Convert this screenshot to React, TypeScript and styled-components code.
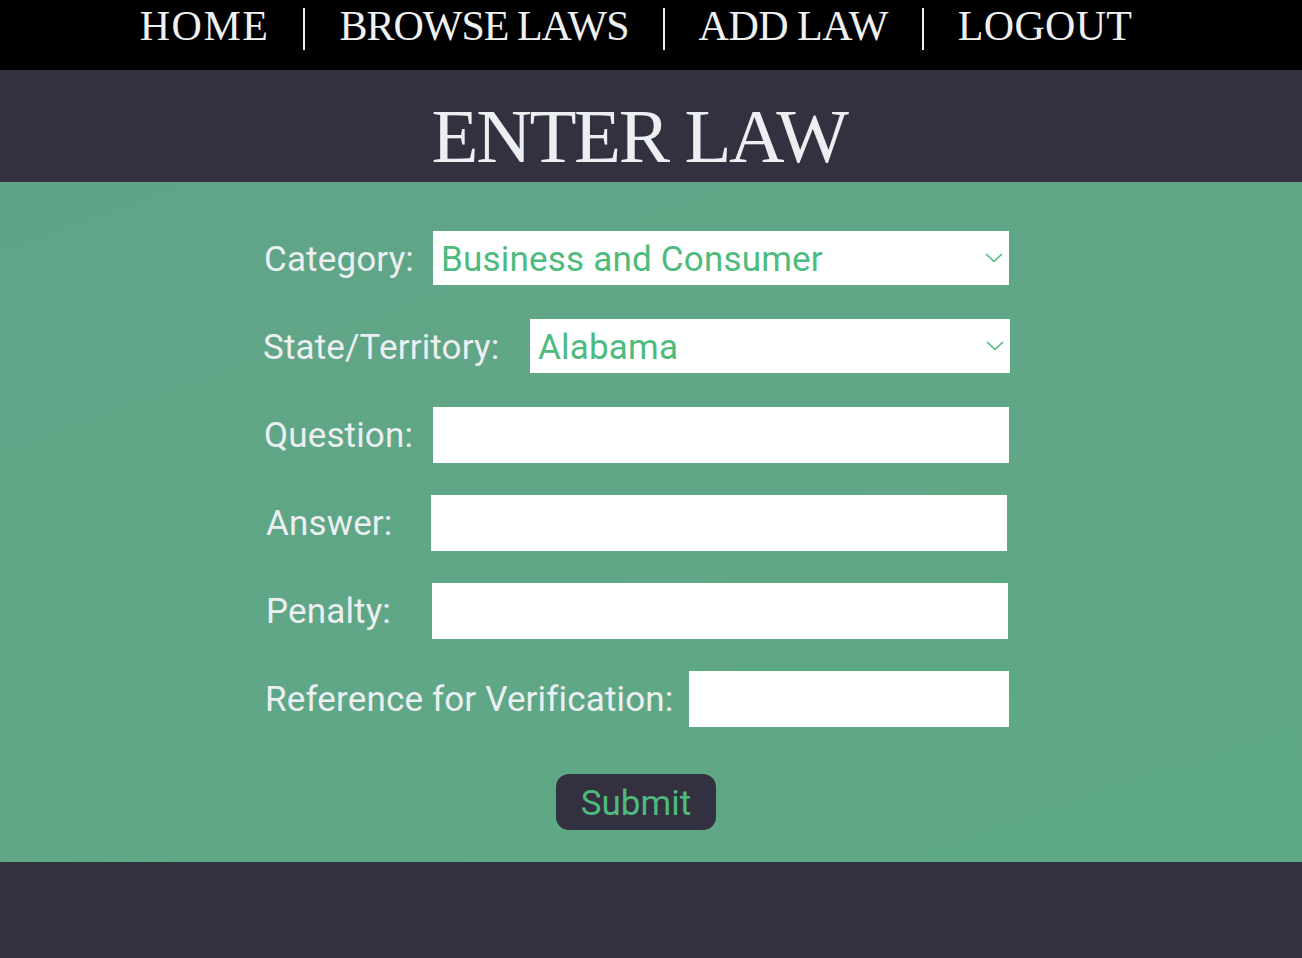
import React from "react";
import styled, { createGlobalStyle } from "styled-components";

const GlobalStyle = createGlobalStyle`
  html, body {
    margin: 0;
    padding: 0;
    background: #33313f;
  }
  body {
    font-family: Roboto, "Liberation Sans", sans-serif;
  }
  * { box-sizing: border-box; }
`;

const Page = styled.div`
  min-height: 958px;
  background: #33313f;
`;

const NavBar = styled.nav`
  height: 70px;
  background: #000;
  display: flex;
  justify-content: center;
  align-items: flex-start;
  padding-right: 30px;
  gap: 34px;
`;

const NavLink = styled.a<{ $ls?: number }>`
  font-family: "Liberation Serif", "Times New Roman", serif;
  font-size: 42px;
  line-height: 52px;
  color: #eef0f2;
  text-decoration: none;
  letter-spacing: ${(p) => p.$ls ?? 0}px;
  word-spacing: -1px;
  white-space: nowrap;
`;

const Sep = styled.span`
  display: block;
  width: 2px;
  height: 42px;
  margin-top: 8px;
  background: #eef0f2;
`;

const TitleBand = styled.header`
  height: 112px;
  background: #33313f;
  display: flex;
  justify-content: center;
  padding-right: 24px;
`;

const Title = styled.h1`
  margin: 0;
  font-family: "Liberation Serif", "Times New Roman", serif;
  font-weight: normal;
  font-size: 77px;
  line-height: 1;
  letter-spacing: -2.4px;
  color: #eceff1;
  padding-top: 28px;
`;

const FormSection = styled.section`
  background: linear-gradient(160deg, #60a487 0%, #5fa786 55%, #5ea985 100%);
  padding: 49px 0 32px;
  display: flex;
  justify-content: center;
  padding-right: 30px;
`;

const Form = styled.form`
  width: 746px;
  display: flex;
  flex-direction: column;
  align-items: stretch;
  gap: 33px;
`;

const Row = styled.div`
  display: flex;
  align-items: center;
  height: 55px;
`;

const Label = styled.label<{ $shift?: number }>`
  font-family: Roboto, "Liberation Sans", sans-serif;
  font-size: 35px;
  letter-spacing: 0.15px;
  color: #eceff1;
  white-space: nowrap;
  margin-left: ${(p) => p.$shift ?? 0}px;
  padding-top: 2px;
`;

const FieldWrap = styled.div<{ $w: number; $end?: number }>`
  position: relative;
  width: ${(p) => p.$w}px;
  height: 55px;
  margin-left: auto;
  margin-right: ${(p) => p.$end ?? 0}px;
`;

const Select = styled.select`
  appearance: none;
  -webkit-appearance: none;
  width: 100%;
  height: 54px;
  border: none;
  border-radius: 0;
  outline: none;
  background: #fff;
  color: #4dbb7e;
  font-family: Roboto, "Liberation Sans", sans-serif;
  font-size: 35px;
  letter-spacing: 0.2px;
  padding: 2px 40px 0 8px;
`;

const Chevron = styled.svg`
  position: absolute;
  right: 6px;
  top: 22px;
  width: 18px;
  height: 10px;
  pointer-events: none;
`;

const TextInput = styled.input`
  width: 100%;
  height: 56px;
  border: none;
  border-radius: 0;
  outline: none;
  background: #fff;
  font-family: Roboto, "Liberation Sans", sans-serif;
  font-size: 30px;
  padding: 0 8px;
`;

const SubmitRow = styled.div`
  display: flex;
  justify-content: center;
  padding-top: 15px;
`;

const SubmitButton = styled.button`
  width: 160px;
  height: 56px;
  border: none;
  border-radius: 13px;
  background: #33313f;
  color: #4dbb7e;
  font-family: Roboto, "Liberation Sans", sans-serif;
  font-size: 35px;
  letter-spacing: 0;
  cursor: pointer;
  padding: 2px 0 0;
`;

const ChevronIcon = () => (
  <Chevron viewBox="0 0 18 10">
    <path d="M1 1 L9 8.5 L17 1" fill="none" stroke="#4dbb7e" strokeWidth="1.6" />
  </Chevron>
);

const SelectField = ({ w, end, value, options }: { w: number; end?: number; value: string; options: string[] }) => (
  <FieldWrap $w={w} $end={end}>
    <Select defaultValue={value}>
      {options.map((o) => (
        <option key={o}>{o}</option>
      ))}
    </Select>
    <ChevronIcon />
  </FieldWrap>
);

const InputField = ({ w, end }: { w: number; end?: number }) => (
  <FieldWrap $w={w} $end={end}>
    <TextInput type="text" />
  </FieldWrap>
);

export default function App() {
  return (
    <Page>
      <GlobalStyle />
      <NavBar>
        <NavLink href="#" $ls={1.5}>HOME</NavLink>
        <Sep />
        <NavLink href="#" $ls={-1}>BROWSE LAWS</NavLink>
        <Sep />
        <NavLink href="#" $ls={-0.5}>ADD LAW</NavLink>
        <Sep />
        <NavLink href="#" $ls={0.3}>LOGOUT</NavLink>
      </NavBar>
      <TitleBand>
        <Title>ENTER LAW</Title>
      </TitleBand>
      <FormSection>
        <Form onSubmit={(e) => e.preventDefault()}>
          <Row>
            <Label $shift={1}>Category:</Label>
            <SelectField w={576} value="Business and Consumer" options={["Business and Consumer", "Criminal", "Family", "Property"]} />
          </Row>
          <Row>
            <Label>State/Territory:</Label>
            <SelectField w={480} end={-1} value="Alabama" options={["Alabama", "Alaska", "Arizona", "Arkansas"]} />
          </Row>
          <Row>
            <Label $shift={1}>Question:</Label>
            <InputField w={576} />
          </Row>
          <Row>
            <Label $shift={3}>Answer:</Label>
            <InputField w={576} end={2} />
          </Row>
          <Row>
            <Label $shift={3}>Penalty:</Label>
            <InputField w={576} end={1} />
          </Row>
          <Row>
            <Label $shift={2}>Reference for Verification:</Label>
            <InputField w={320} />
          </Row>
          <SubmitRow>
            <SubmitButton type="submit">Submit</SubmitButton>
          </SubmitRow>
        </Form>
      </FormSection>
    </Page>
  );
}
